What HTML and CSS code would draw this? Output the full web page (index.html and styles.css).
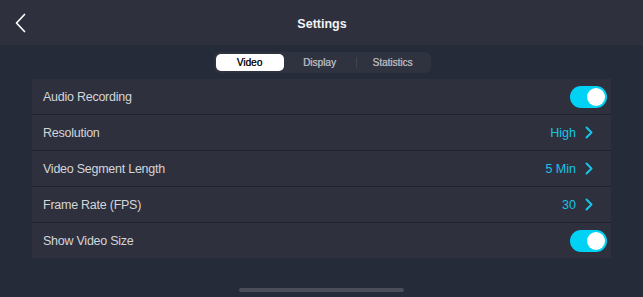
FILE: index.html
```html
<!DOCTYPE html>
<html>
<head>
<meta charset="utf-8">
<link rel="stylesheet" href="styles.css">
</head>
<body>
<div class="app">
  <header class="topbar">
    <button class="back" aria-label="Back">
      <svg width="12" height="20" viewBox="0 0 12 20"><path d="M9.5 1.5 L1.5 10 L9.5 18.5" fill="none" stroke="#ffffff" stroke-width="1.7" stroke-linecap="round" stroke-linejoin="round"/></svg>
    </button>
    <h1 class="title">Settings</h1>
  </header>
  <div class="tabs-wrap">
    <div class="tabs">
      <div class="tab active">Video</div>
      <div class="tab">Display</div>
      <div class="sep"></div>
      <div class="tab">Statistics</div>
    </div>
  </div>
  <div class="list">
    <div class="row">
      <span class="label">Audio Recording</span>
      <span class="toggle"><span class="knob"></span></span>
    </div>
    <div class="row">
      <span class="label">Resolution</span>
      <span class="value">High<svg class="chev" width="8" height="13" viewBox="0 0 8 13"><path d="M1.5 1.5 L6.5 6.5 L1.5 11.5" fill="none" stroke="#19c3e8" stroke-width="2" stroke-linecap="round" stroke-linejoin="round"/></svg></span>
    </div>
    <div class="row">
      <span class="label">Video Segment Length</span>
      <span class="value">5 Min<svg class="chev" width="8" height="13" viewBox="0 0 8 13"><path d="M1.5 1.5 L6.5 6.5 L1.5 11.5" fill="none" stroke="#19c3e8" stroke-width="2" stroke-linecap="round" stroke-linejoin="round"/></svg></span>
    </div>
    <div class="row">
      <span class="label">Frame Rate (FPS)</span>
      <span class="value">30<svg class="chev" width="8" height="13" viewBox="0 0 8 13"><path d="M1.5 1.5 L6.5 6.5 L1.5 11.5" fill="none" stroke="#19c3e8" stroke-width="2" stroke-linecap="round" stroke-linejoin="round"/></svg></span>
    </div>
    <div class="row">
      <span class="label">Show Video Size</span>
      <span class="toggle"><span class="knob"></span></span>
    </div>
  </div>
  <div class="home-bar"></div>
</div>
</body>
</html>
```
FILE: styles.css
```css
* { box-sizing: border-box; }
html, body { margin: 0; padding: 0; }
body {
  width: 643px;
  height: 297px;
  overflow: hidden;
  background: #252b39;
  font-family: "Liberation Sans", Arial, sans-serif;
}
.app {
  display: flex;
  flex-direction: column;
  height: 297px;
}
.topbar {
  height: 45px;
  background: #2e313d;
  display: flex;
  align-items: center;
  justify-content: center;
  position: relative;
}
.back {
  position: absolute;
  left: 15px;
  top: 13px;
  padding: 0;
  border: 0;
  background: none;
  width: 12px;
  height: 20px;
}
.back svg { display: block; }
.title {
  margin: 0;
  font-size: 12.5px;
  font-weight: bold;
  color: #f2f3f5;
  padding-top: 2px;
  padding-left: 1px;
}
.tabs-wrap {
  display: flex;
  justify-content: center;
  padding-top: 7px;
  padding-left: 1px;
}
.tabs {
  display: flex;
  align-items: center;
  width: 217px;
  height: 21px;
  padding: 2px;
  background: #2f3340;
  border-radius: 6px;
}
.tab {
  flex: 1;
  height: 17px;
  line-height: 17px;
  text-align: center;
  font-size: 10px;
  color: #b0b3bb;
  border-radius: 5px;
  text-shadow: 0.3px 0 0 currentColor;
}
.tab.active {
  background: #ffffff;
  color: #111111;
  flex: 0 0 68px;
}
.sep {
  width: 1px;
  height: 11px;
  background: #41454f;
}
.list {
  margin: 6px 32px 0 32px;
  background: #1f2330;
  display: flex;
  flex-direction: column;
  gap: 1px;
}
.row {
  height: 35px;
  background: #2e313d;
  display: flex;
  align-items: center;
  justify-content: space-between;
  padding: 0 4px 0 11px;
}
.label {
  font-size: 12.5px;
  letter-spacing: -0.25px;
  color: #d3d5da;
}
.value {
  display: flex;
  align-items: center;
  font-size: 12.5px;
  color: #19c3e8;
  padding-right: 14px;
}
.chev {
  margin-left: 9px;
  display: block;
}
.toggle {
  width: 37px;
  height: 22px;
  border-radius: 11px;
  background: #00d2f5;
  position: relative;
}
.knob {
  position: absolute;
  right: 2px;
  top: 2px;
  width: 18px;
  height: 18px;
  border-radius: 50%;
  background: #ffffff;
}
.home-bar {
  margin: 30px auto 0;
  width: 165px;
  height: 4px;
  border-radius: 2px;
  background: #4b4e57;
}
```
